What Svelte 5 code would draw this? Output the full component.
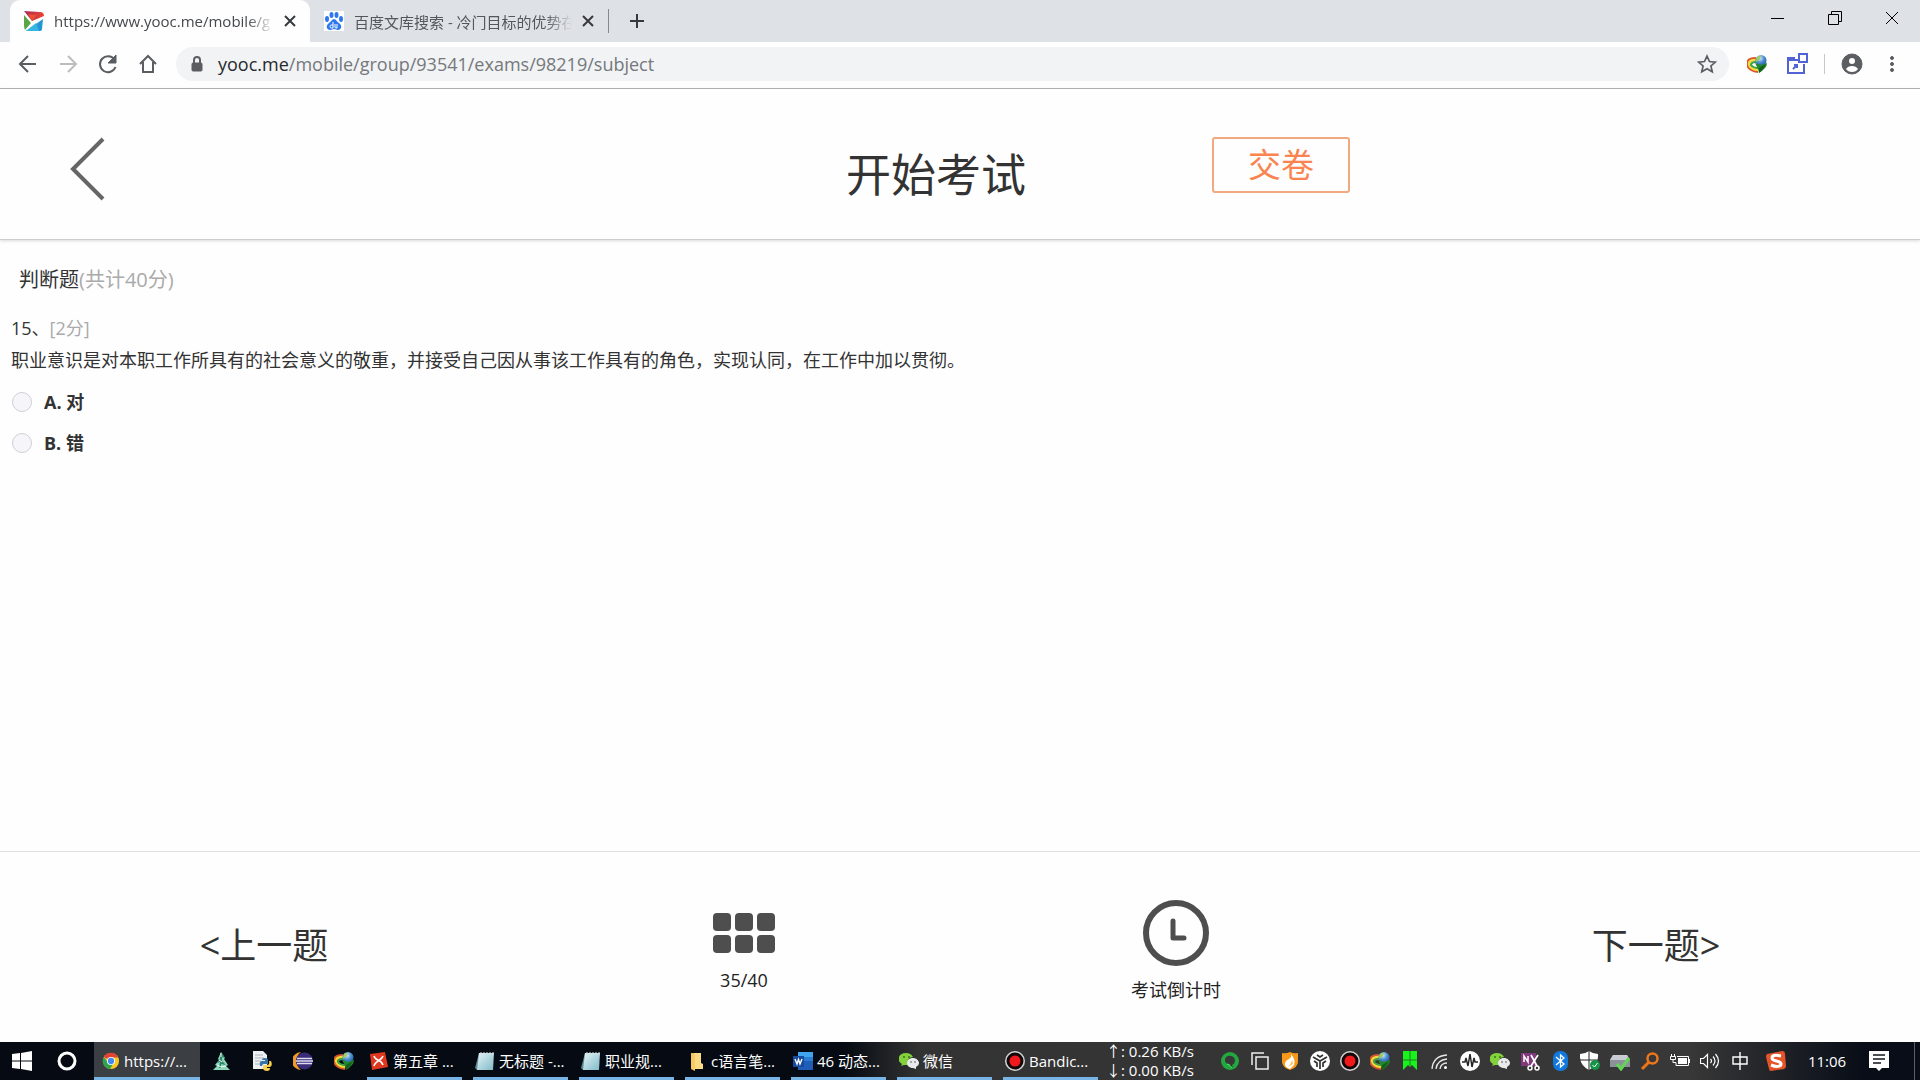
<script lang="ts">
	interface Task {
		icon: string;
		label: string;
	}

	const options = [
		{ key: 'A', text: '对' },
		{ key: 'B', text: '错' }
	];

	const pinned = [
		{ icon: 'tree', label: 'Tree' },
		{ icon: 'python', label: 'Python' },
		{ icon: 'eclipse', label: 'Eclipse' },
		{ icon: 'idm', label: 'IDM' }
	];

	const tasks: Task[] = [
		{ icon: 'xmind', label: '第五章 ...' },
		{ icon: 'notepad', label: '无标题 -...' },
		{ icon: 'notepad', label: '职业规...' },
		{ icon: 'folder', label: 'c语言笔...' },
		{ icon: 'word', label: '46 动态...' },
		{ icon: 'wechat', label: '微信' },
		{ icon: 'record', label: 'Bandic...' }
	];

	const tray = [
		'evernote', 'windows', 'shield', 'tri', 'record', 'idm', 'ribbon', 'wifi', 'wave',
		'wechat', 'onenote', 'bluetooth', 'defender', 'drive', 'search', 'battery', 'volume', 'ime'
	];

	let answer = $state('');
</script>

{#snippet icon(name: string, size: number)}
	<svg width={size} height={size} viewBox="0 0 20 20" aria-hidden="true"><use href="#{name}" /></svg>
{/snippet}

<svg class="sprite" aria-hidden="true">
	<defs>
		<radialGradient id="globe" cx="0.4" cy="0.3" r="0.8">
			<stop offset="0" stop-color="#d4eafb" />
			<stop offset="0.5" stop-color="#4a8bd0" />
			<stop offset="1" stop-color="#1b4f93" />
		</radialGradient>
		<linearGradient id="pad" x1="0" y1="0" x2="1" y2="1">
			<stop offset="0" stop-color="#e4f4f7" />
			<stop offset="1" stop-color="#7fb9c8" />
		</linearGradient>
		<linearGradient id="flag" x1="0" y1="0" x2="1" y2="0">
			<stop offset="0" stop-color="#a82a5e" />
			<stop offset="1" stop-color="#ee4430" />
		</linearGradient>
	</defs>

	<symbol id="yooc" viewBox="0 0 20 20">
		<path d="M0 0l16 1q4 0 4 4L8 10z" fill="url(#flag)" />
		<path d="M4 3l9 1-5 6z" fill="#e8502f" />
		<path d="M0 4l7 8-6 7q-1-2-1-5z" fill="#5aa646" />
		<path d="M19 8l-1 10q0 2-3 2H2z" fill="#2397d4" />
		<path d="M12 12l3 8H2z" fill="#37b6e4" />
	</symbol>
	<symbol id="baidu" viewBox="0 0 20 20">
		<rect width="20" height="20" fill="#fff" />
		<g fill="#2e78ee">
			<ellipse cx="3" cy="8" rx="2" ry="3" />
			<ellipse cx="7.500" cy="4" rx="2" ry="3" />
			<ellipse cx="12.500" cy="4" rx="2" ry="3" />
			<ellipse cx="17" cy="8" rx="2" ry="3" />
			<path d="M10 8c2 0 3 3 5 4 4 3 2 7-1 7-2 0-2-1-4-1s-2 1-4 1c-3 0-5-4-1-7 2-1 3-4 5-4z" />
		</g>
		<path d="M9 11v6H7.500a1.500 1.500 0 010-3H9M11 13v3q0 1 1 1h1v-4" fill="none" stroke="#fff" />
	</symbol>
	<symbol id="idm" viewBox="0 0 20 20">
		<path d="M9 4Q0 4 0 10q1 7 11 8" fill="none" stroke="#d9532c" stroke-width="2" />
		<path d="M9 6Q2 6 2 10q1 5 9 6" fill="none" stroke="#f4d738" stroke-width="2.500" />
		<path d="M9 8Q4 8 4 11q2 3 8 3" fill="none" stroke="#3fa147" stroke-width="2" />
		<circle cx="14" cy="6.500" r="5.500" fill="url(#globe)" />
		<path d="M10 3q3-2 4 0l-2 3-3 2z" fill="#9ccf5b" />
		<path d="M8 9l6 2 6-2q0 5-8 10l-1-4z" fill="#23872b" />
		<path d="M12 14l7-4q-2 5-7 9z" fill="#14601c" />
	</symbol>
	<symbol id="chrome" viewBox="0 0 20 20">
		<circle cx="10" cy="10" r="9" fill="#f9c922" />
		<path d="M10 10L2 5.500A9 9 0 0118 6H10z" fill="#e14334" />
		<path d="M2 5.500A9 9 0 009 19l4-7-6 0z" fill="#31a350" />
		<circle cx="10" cy="10" r="4.500" fill="#fff" />
		<circle cx="10" cy="10" r="3.500" fill="#4688f1" />
	</symbol>
	<symbol id="tree" viewBox="0 0 20 20">
		<path d="M10 1l4 6-1 1 4 6-2 1 4 4H2l4-4-2-1 4-5-1-1z" fill="#8ad8b8" />
		<path d="M10 1l4 6-3-1v4l4 4-5-1v4H8l1-6-3 1 3-4V6z" fill="#2f8468" />
		<path d="M10 2v4M8 9l3 2M6 14l4 2 5-1" stroke="#fff" fill="none" />
	</symbol>
	<symbol id="python" viewBox="0 0 20 20">
		<path d="M1 0h10l4 4v14H1z" fill="#edf0f3" />
		<path d="M3 4h8M3 7h9M3 10h6M3 13h5" stroke="#abb4bd" />
		<path d="M10 9q0-2 3-2t3 2v4h-4q-2 0-2 2H8q-1-5 2-5h3V9z" fill="#3873a8" />
		<path d="M17 10h2q2 5-1 6h-3v1h3q0 3-3 3t-4-2v-3q1-1 4-1t2-4z" fill="#f7cf48" />
	</symbol>
	<symbol id="eclipse" viewBox="0 0 20 20">
		<path d="M8 1a9 9 0 000 18A11 11 0 018 1z" fill="#f39a2d" />
		<circle cx="11.500" cy="10" r="8.500" fill="#3b2c7a" />
		<path d="M4 7.500h15M3 10h17M4 12.500h15" stroke="#dcdbef" stroke-width="1.500" />
	</symbol>
	<symbol id="xmind" viewBox="0 0 20 20">
		<path d="M1 3l15-2 3 15-16 3z" fill="#df381f" />
		<path d="M5 5c1 5 7 3 9 9M14 5c-1 4-8 5-9 10" stroke="#fff" stroke-width="1.500" fill="none" />
	</symbol>
	<symbol id="notepad" viewBox="0 0 20 20">
		<path d="M4 2L0 17l2 2 3-3z" fill="#5e8994" />
		<path d="M4 2h15l-1 17H2z" fill="url(#pad)" />
		<path d="M6 1v3M9 1v3M12 1v3M15 1v3M18 1v3" stroke="#d6dde0" />
	</symbol>
	<symbol id="folder" viewBox="0 0 20 20">
		<path d="M4 2h8v16H4z" fill="#e9b949" />
		<path d="M7 2h7v10l2 1v5H7z" fill="#fbdc86" />
		<path d="M4 2l4 2v16l-4-2z" fill="#f7cb61" />
	</symbol>
	<symbol id="word" viewBox="0 0 20 20">
		<path d="M5 1h15v18H5z" fill="#1f5eb8" />
		<path d="M5 1h15v5H5z" fill="#41a5ee" />
		<path d="M5 6h15v4H5z" fill="#2b7cd3" />
		<path d="M0 5h11v11H0z" fill="#174a9c" />
		<path d="M2 8l2 5 1.500-4.500L7 13l2-5" stroke="#fff" stroke-width="1.400" fill="none" />
	</symbol>
	<symbol id="wechat" viewBox="0 0 20 20">
		<path d="M7 2c-9 0-9 9-4 11l-1 2 3-1h4q-2-7 5-8Q12 2 7 2z" fill="#83d13b" />
		<path d="M14 7c-8 0-8 10 0 10l3 1v-2c6-3 2-9-3-9z" fill="#e9eaec" />
		<circle cx="5" cy="6" r="1" fill="#3b701d" /><circle cx="10" cy="6" r="1" fill="#3b701d" />
		<circle cx="12" cy="11" r="1" fill="#8c9195" /><circle cx="16" cy="11" r="1" fill="#8c9195" />
	</symbol>
	<symbol id="record" viewBox="0 0 20 20">
		<circle cx="10" cy="10" r="10" fill="#d5d5d5" />
		<circle cx="10" cy="10" r="8.500" fill="#120809" />
		<circle cx="10" cy="10" r="5.500" fill="#f2191c" />
	</symbol>
	<symbol id="evernote" viewBox="0 0 20 20">
		<circle cx="10" cy="10" r="9" fill="#22a83f" />
		<path d="M5 9c0-5 9-6 10 0q0 4-3 5l1 2c-2 0-3-1-3-3-3 0-5-1-5-4z" fill="#383838" />
		<path d="M7 13q3 1 5 4" stroke="#4be36d" fill="none" />
	</symbol>
	<symbol id="windows" viewBox="0 0 20 20">
		<path d="M14 2H2v12M6 6h12v12H6z" fill="none" stroke="#eee" stroke-width="1.500" />
	</symbol>
	<symbol id="shield" viewBox="0 0 20 20">
		<path d="M10 1q4 2 8 1v9q0 5-8 8-8-3-8-8V2q4 1 8-1z" fill="#f79a1c" />
		<path d="M11 3q5 6 3 11l-4 4q-6-2-5-6 1-3 4-4 3-2 2-5z" fill="#fff" />
		<path d="M12 9q-1 4-4 7l5-3z" fill="#ffc25b" />
	</symbol>
	<symbol id="tri" viewBox="0 0 20 20">
		<circle cx="10" cy="10" r="10" fill="#fff" />
		<path d="M3 6l7 4 7-4M10 10v8M7 4l3 2 3-2M4 10l3 2v4M16 10l-3 2v4" stroke="#303030" stroke-width="1.700" fill="none" />
	</symbol>
	<symbol id="ribbon" viewBox="0 0 20 20">
		<path d="M3 0h14v19l-5-5-2 2-2-2-5 5z" fill="#18f41b" />
		<path d="M10 0v16M3 9h14" stroke="#227c24" />
	</symbol>
	<symbol id="wifi" viewBox="0 0 20 20">
		<g fill="none" stroke="#e8e8e8" stroke-width="1.300">
			<path d="M2 18Q3 5 17 4" /><path d="M6 18Q7 9 17 8" /><path d="M10 18q1-6 7-6" />
		</g>
		<circle cx="15.500" cy="16.500" r="1.500" fill="#fff" />
	</symbol>
	<symbol id="wave" viewBox="0 0 20 20">
		<circle cx="10" cy="10" r="10" fill="#fff" />
		<path d="M2 11h3l1-4 2 8 2-12 2 13 2-9 1 4h3" stroke="#272727" stroke-width="1.500" fill="none" />
	</symbol>
	<symbol id="onenote" viewBox="0 0 20 20">
		<path d="M1 2h15v13H1z" fill="#80397b" />
		<path d="M4 11V5l4 6V5" stroke="#fff" stroke-width="1.500" fill="none" />
		<path d="M11 4l6 11M18 4l-7 11" stroke="#fff" stroke-width="1.700" />
		<circle cx="10" cy="17" r="2" fill="none" stroke="#fff" stroke-width="1.500" />
		<circle cx="17" cy="17" r="2" fill="none" stroke="#fff" stroke-width="1.500" />
	</symbol>
	<symbol id="bluetooth" viewBox="0 0 20 20">
		<rect x="3" width="15" height="20" rx="7" fill="#1279dc" />
		<path d="M6 6l8 7-3.500 3V4L14 7l-8 7" stroke="#fff" stroke-width="1.300" fill="none" />
	</symbol>
	<symbol id="defender" viewBox="0 0 20 20">
		<path d="M9 0q4 3 9 3 1 11-9 16Q-1 14 0 3q5 0 9-3z" fill="#fff" />
		<path d="M9 0v19M0 9h18" stroke="#222" />
		<circle cx="15" cy="14" r="5" fill="#159447" />
		<path d="M12.500 14l2 2 3-4" stroke="#fff" fill="none" />
	</symbol>
	<symbol id="drive" viewBox="0 0 20 20">
		<path d="M3 4h14l3 5v7H0V9z" fill="#8c929a" />
		<path d="M3 4h14l3 5H0z" fill="#c8cbd2" />
		<path d="M7 13l4 5 8-11" stroke="#63d554" stroke-width="3" fill="none" />
	</symbol>
	<symbol id="search" viewBox="0 0 20 20">
		<circle cx="12.500" cy="7.500" r="5" fill="none" stroke="#ed7619" stroke-width="2.500" />
		<path d="M9 11l-7 7" stroke="#ed7619" stroke-width="3" />
	</symbol>
	<symbol id="battery" viewBox="0 0 20 20">
		<path d="M7 5.500h11.500v9H6v-3" fill="none" stroke="#fff" />
		<path d="M8 7h9v6H8zM18 8h2v4h-2z" fill="#fff" />
		<path d="M.5 5.500v3h5v-3zM3 8.500v3h3M1.500 3v2M4.500 3v2" fill="none" stroke="#fff" />
	</symbol>
	<symbol id="volume" viewBox="0 0 20 20">
		<path d="M.5 7.500h3l4-4v13l-4-4h-3zM10.500 8q2 2 0 4M13 5.500q4 4.500 0 9M15.500 3q6 7 0 14" fill="none" stroke="#fff" stroke-width="1.200" />
	</symbol>
	<symbol id="ime" viewBox="0 0 20 20">
		<path d="M3 6h14v7H3zM10 1v18" fill="none" stroke="#fff" stroke-width="1.400" />
	</symbol>
	<symbol id="sogou" viewBox="0 0 20 20">
		<path d="M1 3l15-3q3 0 3 3l1 12q0 2-2 3L5 20q-2 0-2-2L0 6q0-2 1-3z" fill="#e55428" />
		<path d="M15 5Q6 3 6 7c0 4 9 2 9 6 0 3-5 3-10 1" fill="none" stroke="#fff" stroke-width="3" />
	</symbol>
</svg>

<div class="screen">
	<div class="tabs">
		<div class="tab active">
			{@render icon('yooc', 20)}
			<span class="tab-title">https://www.yooc.me/mobile/g</span>
			<button class="close" aria-label="关闭标签页">
				<svg width="12" height="12" viewBox="0 0 12 12"><path d="M1 1l10 10M11 1L1 11" /></svg>
			</button>
		</div>
		<div class="tab">
			{@render icon('baidu', 20)}
			<span class="tab-title">百度文库搜索 - 冷门目标的优势在</span>
			<button class="close" aria-label="关闭标签页">
				<svg width="12" height="12" viewBox="0 0 12 12"><path d="M1 1l10 10M11 1L1 11" /></svg>
			</button>
		</div>
		<button class="new-tab" aria-label="新标签页">
			<svg width="16" height="16" viewBox="0 0 16 16"><path d="M8 1v14M1 8h14" /></svg>
		</button>
		<div class="window-controls">
			<button aria-label="最小化"><svg width="14" height="14" viewBox="0 0 14 14"><path d="M0 7.500h13" /></svg></button>
			<button aria-label="还原">
				<svg width="14" height="14" viewBox="0 0 14 14"><path d="M.5 3.500h10v10H.5zM3.500 3V.5h10v10H11" /></svg>
			</button>
			<button aria-label="关闭"><svg width="14" height="14" viewBox="0 0 14 14"><path d="M1 1l12 12M13 1L1 13" /></svg></button>
		</div>
	</div>

	<div class="toolbar">
		<button class="tool" aria-label="后退">
			<svg width="24" height="24" viewBox="0 0 24 24"><path d="M20 12H5M12 4l-8 8 8 8" /></svg>
		</button>
		<button class="tool faded" aria-label="前进">
			<svg width="24" height="24" viewBox="0 0 24 24"><path d="M4 12h15M12 4l8 8-8 8" /></svg>
		</button>
		<button class="tool" aria-label="刷新">
			<svg width="24" height="24" viewBox="0 0 24 24">
				<path d="M18.500 7.500A8 8 0 1019.500 15" /><path class="solid" d="M20 3v8h-8z" />
			</svg>
		</button>
		<button class="tool" aria-label="主页">
			<svg width="24" height="24" viewBox="0 0 24 24"><path d="M4 12l8-8 8 8M7 10v10h10V10" /></svg>
		</button>
		<div class="omnibox">
			<svg class="lock" width="14" height="16" viewBox="0 0 14 16">
				<path d="M4 7V4a3 3 0 016 0v3" /><rect x="2" y="7" width="10" height="8" rx="1" />
			</svg>
			<a class="url" href="#subject"><b>yooc.me</b>/mobile/group/93541/exams/98219/subject</a>
			<button class="tool" aria-label="收藏">
				<svg width="20" height="20" viewBox="0 0 24 24">
					<path d="M12 2.500l3 6.500 7 .7-5.300 4.700 1.600 7L12 17.700 5.700 21.400l1.600-7L2 9.700 9 9z" />
				</svg>
			</button>
		</div>
		<button class="tool" aria-label="IDM">{@render icon('idm', 20)}</button>
		<button class="tool ext" aria-label="扩展程序">
			<svg width="22" height="22" viewBox="0 0 22 22">
				<path d="M12 7H2M2 7v13h16V11M2 7V5h6v2" /><path d="M13 1h8v8h-8zM7 16l4-4M8 12h3v3" />
			</svg>
		</button>
		<span class="divider"></span>
		<button class="tool" aria-label="用户">
			<svg width="22" height="22" viewBox="0 0 22 22">
				<circle class="solid" cx="11" cy="11" r="10" />
				<circle class="hole" cx="11" cy="8" r="3" /><path class="hole" d="M5 16q2-3 6-3t6 3q-2 3-6 3t-6-3z" />
			</svg>
		</button>
		<button class="tool" aria-label="菜单">
			<svg width="20" height="20" viewBox="0 0 20 20">
				<circle class="solid" cx="10" cy="4" r="1.500" /><circle class="solid" cx="10" cy="10" r="1.500" /><circle class="solid" cx="10" cy="16" r="1.500" />
			</svg>
		</button>
	</div>

	<header>
		<button class="back" aria-label="返回">
			<svg width="36" height="64" viewBox="0 0 36 64"><path d="M33 2L3 32l30 30" /></svg>
		</button>
		<h1>开始考试</h1>
		<button class="submit">交卷</button>
	</header>

	<main>
		<h2>判断题<span>(共计40分)</span></h2>
		<fieldset>
			<legend>15、<span>[2分]</span></legend>
			<p>职业意识是对本职工作所具有的社会意义的敬重，并接受自己因从事该工作具有的角色，实现认同，在工作中加以贯彻。</p>
			{#each options as option}
				<label class="option">
					<input type="radio" name="answer" value={option.key} bind:group={answer} />
					{option.key}. {option.text}
				</label>
			{/each}
		</fieldset>
	</main>

	<footer>
		<button class="step">&lt;上一题</button>
		<button class="info sheet">
			<svg width="62" height="40" viewBox="0 0 62 40">
				{#each [0, 22, 44] as x}
					<rect {x} y="0" width="18" height="18" rx="4" />
					<rect {x} y="22" width="18" height="18" rx="4" />
				{/each}
			</svg>
			35/40
		</button>
		<div class="info">
			<svg width="68" height="68" viewBox="0 0 68 68">
				<circle cx="34" cy="34" r="30" /><path d="M31 22v17h11" />
			</svg>
			考试倒计时
		</div>
		<button class="step">下一题&gt;</button>
	</footer>

	<nav class="taskbar" aria-label="任务栏">
		<button class="start" aria-label="开始">
			<svg width="20" height="20" viewBox="0 0 20 20">
				<path d="M0 3l8-1v7.500H0zM9 2l11-2v9.500H9zM0 10.500h8V18l-8-1zM9 10.500h11V20L9 18z" fill="#fff" />
			</svg>
		</button>
		<button class="cortana" aria-label="Cortana">
			<svg width="20" height="20" viewBox="0 0 20 20"><circle cx="10" cy="10" r="8" fill="none" stroke="#fff" stroke-width="3" /></svg>
		</button>
		<button class="task current">{@render icon('chrome', 18)}https://...</button>
		{#each pinned as app}
			<button class="pin" aria-label={app.label}>{@render icon(app.icon, 20)}</button>
		{/each}
		<div class="tasks">
			{#each tasks as task}
				<button class="task">{@render icon(task.icon, 20)}{task.label}</button>
			{/each}
		</div>
		<div class="speed">
			<span>↑: 0.26 KB/s</span>
			<span>↓: 0.00 KB/s</span>
		</div>
		<div class="tray">
			{#each tray as name}
				<button class="tray-icon" aria-label={name}>{@render icon(name, 20)}</button>
			{/each}
			<button class="pin" aria-label="sogou">{@render icon('sogou', 20)}</button>
			<time>11:06</time>
			<button class="pin" aria-label="通知">
				<svg width="20" height="20" viewBox="0 0 20 20">
					<path d="M0 0h20v17h-7l-3 3-3-3H0z" fill="#fff" /><path d="M4 4h12M4 8h12M4 12h8" stroke="#10141c" stroke-width="1.500" />
				</svg>
			</button>
			<span class="peek"></span>
		</div>
	</nav>
</div>

<style>
	:global(body) {
		margin: 0;
	}

	.sprite {
		position: absolute;
		width: 0;
		height: 0;
	}

	.screen {
		display: flex;
		flex-direction: column;
		min-height: 100vh;
		background: #fefefe;
		color: #333;
		font-family: "Open Sans", "Noto Sans CJK SC", sans-serif;
		font-size: 18px;
	}

	button {
		display: flex;
		align-items: center;
		justify-content: center;
		padding: 0;
		border: 0;
		background: none;
		color: inherit;
		font: inherit;
	}

	svg {
		flex: none;
	}

	/* browser chrome */
	.tabs {
		display: flex;
		height: 42px;
		padding-left: 10px;
		background: #dee1e6;
		font-size: 15px;
	}

	.tab {
		display: flex;
		align-items: center;
		gap: 10px;
		box-sizing: border-box;
		width: 298px;
		padding: 0 14px;
		color: #54575b;
	}

	.tab.active {
		width: 300px;
		background: #fefefe;
		border-radius: 10px 10px 0 0;
		color: #45484c;
	}

	.tab-title {
		flex: 1;
		overflow: hidden;
		white-space: nowrap;
		mask-image: linear-gradient(to right, #000 88%, transparent);
	}

	.tabs path {
		fill: none;
		stroke: #36393d;
		stroke-width: 2;
	}

	.close {
		width: 12px;
	}

	.new-tab {
		width: 56px;
		height: 24px;
		align-self: center;
		border-left: 1px solid #85888c;
	}

	.window-controls {
		display: flex;
		margin-left: auto;
	}

	.window-controls button {
		width: 57px;
		height: 36px;
	}

	.window-controls path {
		stroke: #000;
		stroke-width: 1;
	}

	.toolbar {
		display: flex;
		align-items: center;
		height: 44px;
		padding: 0 8px 2px;
		border-bottom: 1px solid #b4b4b4;
	}

	.tool {
		width: 40px;
		height: 34px;
	}

	.toolbar path {
		fill: none;
		stroke: #5a5d61;
		stroke-width: 2;
	}

	.toolbar .faded path {
		stroke: #babcbe;
	}

	.toolbar .ext path {
		stroke: #5263d5;
	}

	.toolbar .solid,
	.lock rect {
		fill: #5a5d61;
		stroke: #5a5d61;
	}

	.toolbar .solid {
		stroke-width: 1;
	}

	.toolbar .hole {
		fill: #fff;
		stroke: none;
	}

	.omnibox {
		display: flex;
		align-items: center;
		flex: 1;
		height: 34px;
		margin: 0 8px;
		padding: 0 2px 0 14px;
		border-radius: 17px;
		background: #f1f3f4;
	}

	.url {
		flex: 1;
		margin-left: 14px;
		color: #75787c;
		text-decoration: none;
	}

	.url b {
		color: #27292c;
		font-weight: 400;
	}

	.divider {
		width: 1px;
		height: 20px;
		margin: 0 7px;
		background: #c6c8ca;
	}

	/* exam page */
	header {
		display: grid;
		grid-template-columns: 141fr auto 149fr;
		align-items: start;
		height: 102px;
		padding-top: 48px;
		border-bottom: 1px solid #ccc;
		box-shadow: 0 1px 3px rgba(0, 0, 0, 0.15);
	}

	.back {
		width: 36px;
		margin-left: 70px;
	}

	.back path {
		fill: none;
		stroke: #666;
		stroke-width: 4;
	}

	h1 {
		margin: 8px 0 0;
		font-size: 45px;
		font-weight: 400;
		line-height: 60px;
	}

	.submit {
		width: 138px;
		height: 56px;
		margin-left: 186px;
		padding-bottom: 4px;
		border: 2px solid #f3a97f;
		border-radius: 3px;
		color: #fa8450;
		font-size: 33px;
	}

	main {
		flex: 1;
		padding: 23px 11px;
	}

	h2 {
		margin: 0 8px 15px;
		font-size: 20px;
		font-weight: 400;
		line-height: 34px;
	}

	h2 span,
	legend span {
		color: #aaa;
	}

	fieldset {
		margin: 0;
		padding: 0;
		border: 0;
		line-height: 32px;
	}

	legend {
		padding: 0;
	}

	p {
		margin: 0 0 10px;
	}

	.option {
		display: flex;
		align-items: center;
		gap: 12px;
		height: 32px;
		margin: 0 1px 9px;
		font-weight: 700;
	}

	.option input {
		appearance: none;
		box-sizing: border-box;
		width: 20px;
		height: 20px;
		margin: 0;
		border: 1px solid #cfcfd6;
		border-radius: 50%;
		background: #f5f5fa;
	}

	.option input:checked {
		border: 6px solid #fa8450;
	}

	footer {
		display: grid;
		grid-template-columns: 11fr 9fr 9fr 11fr;
		align-items: center;
		height: 190px;
		border-top: 1px solid #dcdfdf;
	}

	.step {
		margin-bottom: 8px;
		font-size: 36px;
	}

	.info {
		display: flex;
		flex-direction: column;
		align-items: center;
		gap: 10px;
		margin-top: 8px;
		color: #222;
		line-height: 26px;
	}

	.sheet {
		gap: 14px;
		margin-top: 12px;
	}

	.info rect {
		fill: #4e4e4e;
	}

	.info circle,
	.info path {
		fill: none;
		stroke: #4e4e4e;
		stroke-width: 6;
		stroke-linecap: round;
		stroke-linejoin: round;
	}

	.info path {
		stroke-width: 5;
	}

	/* taskbar */
	.taskbar {
		display: flex;
		height: 38px;
		overflow: hidden;
		background: linear-gradient(to right, #060b13 44%, #333 48%, #383838 88%, #080d17 97%);
		color: #fff;
		font-size: 15px;
	}

	.start {
		width: 44px;
	}

	.cortana {
		width: 46px;
	}

	.task {
		justify-content: flex-start;
		gap: 4px;
		box-sizing: border-box;
		width: 95px;
		padding-left: 2px;
		border-bottom: 3px solid #78b4e6;
		padding-top: 2px;
		white-space: nowrap;
	}

	.current {
		width: 106px;
		margin-left: 4px;
		padding-left: 8px;
		background: #3b3e42;
	}

	.pin {
		width: 41px;
	}

	.tasks {
		display: flex;
		gap: 11px;
		margin: 0 8px 0 3px;
	}

	.speed {
		display: flex;
		flex-direction: column;
		line-height: 19px;
		white-space: nowrap;
	}

	.tray {
		display: flex;
		margin-left: auto;
	}

	.tray-icon {
		width: 30px;
	}

	time {
		width: 62px;
		line-height: 38px;
		text-align: center;
	}

	.peek {
		margin: 0 5px 0 15px;
		border-left: 1px solid #5b5f66;
	}
</style>
